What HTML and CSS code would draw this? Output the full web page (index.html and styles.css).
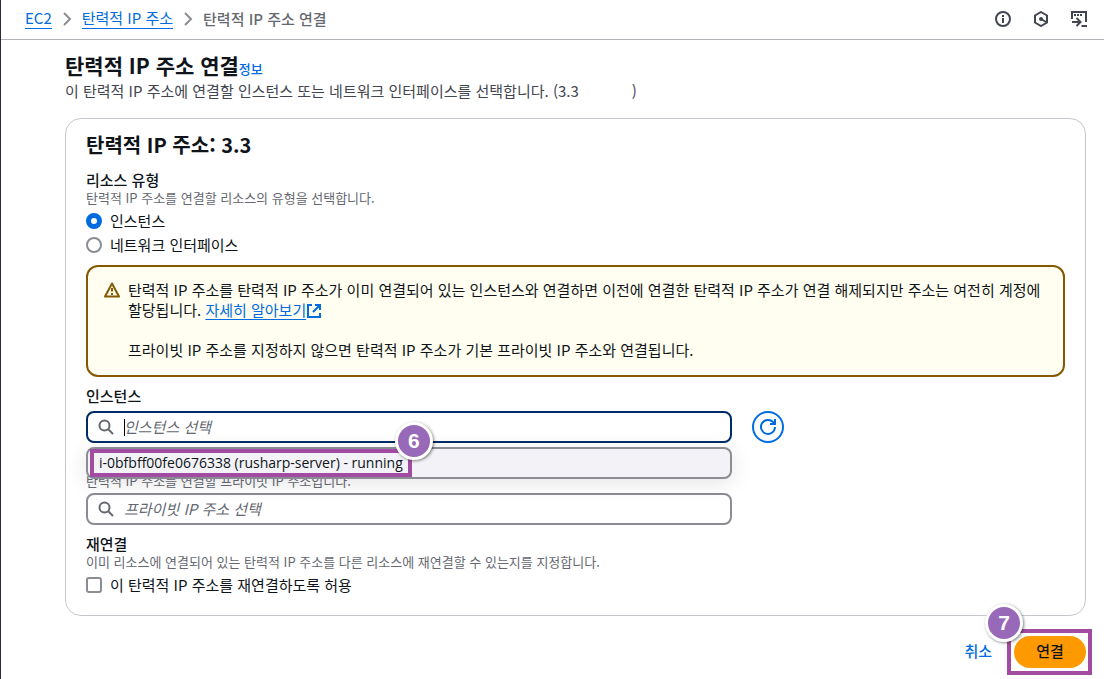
FILE: index.html
```html
<!DOCTYPE html>
<html lang="ko">
<head>
<meta charset="utf-8">
<meta name="viewport" content="width=device-width, initial-scale=1">
<title>탄력적 IP 주소 연결</title>
<link rel="stylesheet" href="styles.css">
</head>
<body>
<header class="topbar">
  <nav class="crumbs" aria-label="breadcrumb">
    <a class="crumb-link" href="#">EC2</a>
    <svg class="chevron" viewBox="0 0 16 16" aria-hidden="true"><path d="M5 2l6 6-6 6"/></svg>
    <a class="crumb-link" href="#">탄력적 IP 주소</a>
    <svg class="chevron" viewBox="0 0 16 16" aria-hidden="true"><path d="M5 2l6 6-6 6"/></svg>
    <span class="crumb-current">탄력적 IP 주소 연결</span>
  </nav>
  <div class="tools">
    <button class="tool" type="button" aria-label="info">
      <svg viewBox="0 0 16 16"><circle cx="8" cy="8" r="7"/><path d="M8 4v2M8 7v5"/></svg>
    </button>
    <button class="tool" type="button" aria-label="diagnostics">
      <svg viewBox="0 0 16 16"><path d="M8 1l6 3.5v7L8 15l-6-3.5v-7z"/><path d="M8 8l6 3.5"/><circle class="solid" cx="8" cy="8" r="1"/></svg>
    </button>
    <button class="tool" type="button" aria-label="shell">
      <svg viewBox="0 0 16 16"><path d="M1 8V1h14v10M3 4h2M6 4h2M9 4h2M1 11h8M5.500 7l4 4-4 4M10.500 15H16"/></svg>
    </button>
  </div>
</header>

<main class="page">
  <div class="title-row">
    <h1 class="title">탄력적 IP 주소 연결</h1><a class="info" href="#">정보</a>
  </div>
  <p class="lead">이 탄력적 IP 주소에 연결할 인스턴스 또는 네트워크 인터페이스를 선택합니다. (3.3<span class="blank"></span>)</p>

  <form>
    <section class="panel">
      <h2 class="panel-title">탄력적 IP 주소: 3.3</h2>

      <fieldset class="group">
        <legend class="label">리소스 유형</legend>
        <p class="help">탄력적 IP 주소를 연결할 리소스의 유형을 선택합니다.</p>
        <div class="choices">
          <label class="choice"><input class="radio" type="radio" name="type" checked>인스턴스</label>
          <label class="choice"><input class="radio" type="radio" name="type">네트워크 인터페이스</label>
        </div>
      </fieldset>

      <div class="alert" role="note">
        <svg class="alert-icon" viewBox="0 0 16 16" aria-hidden="true"><path d="M8 1.500L15 14.500H1z"/><path d="M8 6v3.500M8 11v2"/></svg>
        <div class="alert-body">
          <p class="alert-text">탄력적 IP 주소를 탄력적 IP 주소가 이미 연결되어 있는 인스턴스와 연결하면 이전에 연결한 탄력적 IP 주소가 연결 해제되지만 주소는 여전히 계정에 할당됩니다. <a class="more" href="#"><span class="more-text">자세히 알아보기</span><svg class="external" viewBox="0 0 16 16" aria-hidden="true"><path d="M6 2H2v12h12v-4M9 2h5v5M14 2L7 9"/></svg></a></p>
          <p class="alert-text">프라이빗 IP 주소를 지정하지 않으면 탄력적 IP 주소가 기본 프라이빗 IP 주소와 연결됩니다.</p>
        </div>
      </div>

      <div class="field">
        <label class="label" for="instance">인스턴스</label>
        <div class="field-row">
          <div class="search">
            <svg class="search-icon" viewBox="0 0 16 16" aria-hidden="true"><circle cx="6.500" cy="6.500" r="5"/><path d="M10 10l5 5"/></svg>
            <input class="search-input search-input-active" id="instance" type="text" placeholder="인스턴스 선택">
            <span class="caret"></span>
            <div class="menu" role="listbox">
              <div class="option" role="option"><span class="mark">i-0bfbff00fe0676338 (rusharp-server) - running<span class="step step-menu">6</span></span></div>
            </div>
          </div>
          <div class="field-action">
            <button class="refresh" type="button" aria-label="새로 고침">
              <svg viewBox="0 0 16 16"><path d="M15 8a7 7 0 1 1-2-5l2 2M15 0v5h-5"/></svg>
            </button>
          </div>
        </div>
      </div>

      <div class="field field-covered">
        <label class="help" for="private">탄력적 IP 주소를 연결할 프라이빗 IP 주소입니다.</label>
        <div class="field-row field-row-after-help">
          <div class="search">
            <svg class="search-icon" viewBox="0 0 16 16" aria-hidden="true"><circle cx="6.500" cy="6.500" r="5"/><path d="M10 10l5 5"/></svg>
            <input class="search-input" id="private" type="text" placeholder="프라이빗 IP 주소 선택">
          </div>
        </div>
      </div>

      <fieldset class="group">
        <legend class="label">재연결</legend>
        <p class="help">이미 리소스에 연결되어 있는 탄력적 IP 주소를 다른 리소스에 재연결할 수 있는지를 지정합니다.</p>
        <div class="choices">
          <label class="choice"><input class="check" type="checkbox">이 탄력적 IP 주소를 재연결하도록 허용</label>
        </div>
      </fieldset>
    </section>

    <div class="actions">
      <button class="cancel" type="button">취소</button>
      <div class="submit-wrap">
        <button class="submit" type="submit">연결</button>
        <span class="submit-mark"></span>
        <span class="step step-submit">7</span>
      </div>
    </div>
  </form>
</main>
</body>
</html>
```
FILE: styles.css
```css
* { box-sizing: border-box; }
body {
  margin: 0;
  min-height: 100vh;
  border-left: 1px solid #33263a;
  background: #fff;
  color: #0f141a;
  font: 15px/20px "Noto Sans CJK KR", sans-serif;
}
h1, h2, p, fieldset, legend { margin: 0; padding: 0; border: 0; }
button, input { font: inherit; color: inherit; }
button { margin: 0; padding: 0; border: 0; background: none; cursor: pointer; }
a { color: #006ce0; }
svg { display: block; fill: none; stroke: currentColor; stroke-width: 2; }

.topbar {
  display: flex;
  align-items: center;
  justify-content: space-between;
  height: 40px;
  padding: 0 17px 2px 24px;
  border-bottom: 1px solid #b4b4bb;
}
.crumbs { display: flex; align-items: center; gap: 7px; }
.crumb-link { border-bottom: 1px solid #006ce0; text-decoration: none; }
.crumb-current { color: #656871; font-weight: 500; }
.chevron { width: 16px; height: 16px; color: #8c8c94; }
.tools { display: flex; gap: 22px; color: #424650; }
.tool svg { width: 16px; height: 16px; }
.tool .solid { fill: currentColor; }

.page { padding: 13px 18px 11px 64px; }
.title-row { display: flex; align-items: baseline; }
.title { font-size: 21px; line-height: 24px; font-weight: 700; }
.info { font-size: 13px; line-height: 16px; font-weight: 500; text-decoration: none; }
.lead { margin-top: 4px; color: #424650; }
.blank { display: inline-block; width: 53px; }

.panel {
  display: flex;
  flex-direction: column;
  margin-top: 17px;
  padding: 14px 20px 20px;
  border: 1px solid #c6c6cd;
  border-radius: 16px;
}
.panel-title { margin-bottom: 13px; font-size: 20px; line-height: 24px; font-weight: 700; }
.label { display: block; font-weight: 500; }
.help { display: block; color: #656871; font-size: 13px; line-height: 16px; }
.choices { display: flex; flex-direction: column; gap: 4px; margin-top: 5px; }
.choice { display: flex; align-items: center; gap: 8px; }
.radio, .check {
  appearance: none;
  flex: none;
  width: 16px;
  height: 16px;
  margin: 0;
  border: 2px solid #8c8c94;
  background: #fff;
}
.radio { border-radius: 50%; }
.radio:checked { border: 5px solid #006ce0; }
.check { border-radius: 3px; }

.alert {
  display: flex;
  gap: 8px;
  margin: 10px 0 9px;
  padding: 13px 16px 15px;
  border: 2px solid #855900;
  border-radius: 12px;
  background: #fffef0;
}
.alert-icon { flex: none; width: 16px; height: 16px; margin-top: 2px; color: #855900; }
.alert-icon path { stroke-linejoin: round; }
.alert-body { display: flex; flex-direction: column; gap: 20px; }
.more { text-decoration: none; }
.more-text { text-decoration: underline; text-underline-offset: 3px; }
.external { display: inline-block; width: 16px; height: 16px; vertical-align: -3px; }

.field-row { display: grid; grid-template-columns: 2fr 1fr; gap: 10px; margin: 5px 0 10px; }
.field-covered { padding-top: 20px; }
.field-row-after-help { margin: 4px 0 9px; }
.field-action { padding-left: 10px; }
.search { position: relative; }
.search-icon { position: absolute; top: 8px; left: 12px; width: 16px; height: 16px; color: #656871; }
.search-input {
  display: block;
  width: 100%;
  height: 32px;
  padding: 0 12px 2px 36px;
  border: 2px solid #8c8c94;
  border-radius: 8px;
  background: transparent;
  outline: 0;
}
.search-input-active { border-color: #002b66; }
.search-input::placeholder { color: #656871; font-style: italic; opacity: 1; }
.caret { position: absolute; top: 8px; left: 38px; width: 1px; height: 17px; background: #000; }
.menu {
  position: absolute;
  z-index: 2;
  top: 36px;
  left: 0;
  right: 0;
  height: 32px;
  border: 2px solid #8c8c94;
  border-radius: 8px;
  background: #f3f3f7;
  box-shadow: 0 4px 20px 1px rgba(0, 7, 22, 0.1);
}
.option { display: flex; padding-left: 2px; }
.mark {
  position: relative;
  padding: 0 5px;
  border: 4px solid #a14ba3;
  font: 14px/20px "Open Sans", sans-serif;
  white-space: nowrap;
}
.step {
  position: absolute;
  display: grid;
  place-items: center;
  width: 38px;
  height: 38px;
  border: 3px solid #fff;
  border-radius: 50%;
  background: #9868b9;
  box-shadow: 1px 1px 3px rgba(0, 0, 0, 0.5);
  color: #fff;
  font: 700 21px/24px "Liberation Sans", sans-serif;
}
.step-menu { top: -31px; right: -25px; }
.refresh {
  display: grid;
  place-items: center;
  width: 32px;
  height: 32px;
  border: 2px solid #006ce0;
  border-radius: 50%;
  color: #006ce0;
}
.refresh svg { width: 16px; height: 16px; }

.actions { display: flex; justify-content: flex-end; gap: 22px; margin-top: 20px; }
.cancel { padding-bottom: 2px; color: #006ce0; font-weight: 500; }
.submit-wrap { position: relative; }
.submit {
  display: block;
  width: 72px;
  height: 32px;
  padding-bottom: 2px;
  border-radius: 16px;
  background: #ff9900;
  font-weight: 500;
}
.submit-mark { position: absolute; inset: -7px -6px -7px -7px; border: 4px solid #a14ba3; pointer-events: none; }
.step-submit { top: -32px; left: -29px; }
```
